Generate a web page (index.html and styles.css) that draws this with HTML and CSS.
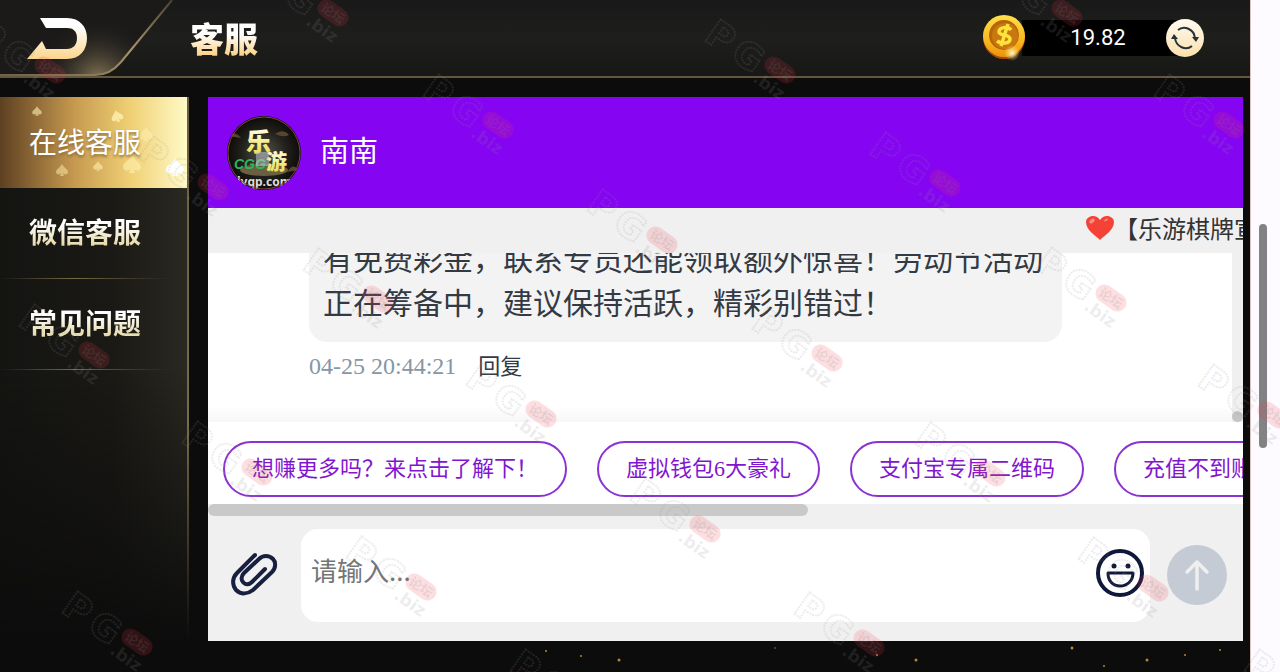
FILE: index.html
```html
<!DOCTYPE html>
<html lang="zh-CN">

<head>
    <meta charset="UTF-8">
    <meta name="viewport" content="width=device-width, initial-scale=1.0">
    <title>客服</title>
    <link rel="stylesheet" href="styles.css">
</head>

<body>
    <div class="app">
        <header class="topbar">
            <button type="button" class="back-btn" aria-label="返回">
                <svg width="180" height="76" viewBox="0 0 180 76">
                    <defs>
                        <linearGradient id="gold" x1="0" y1="0" x2="0" y2="1">
                            <stop offset="0.2" stop-color="#ffffff" />
                            <stop offset="1" stop-color="#fbd58c" />
                        </linearGradient>
                        <radialGradient id="glow" gradientUnits="userSpaceOnUse" cx="98" cy="80" r="62">
                            <stop offset="0" stop-color="#8a7a58" />
                            <stop offset="1" stop-color="#1b1a19" stop-opacity="0" />
                        </radialGradient>
                        <linearGradient id="edge" x1="0" y1="1" x2="1" y2="0">
                            <stop offset="0" stop-color="#6f6047" />
                            <stop offset="0.55" stop-color="#a8936b" />
                            <stop offset="1" stop-color="#4a4334" />
                        </linearGradient>
                    </defs>
                    <path d="M0 0H172L121 62Q110 75 95 75H0Z" fill="#1b1a19" />
                    <path d="M0 0H172L121 62Q110 75 95 75H0Z" fill="url(#glow)" />
                    <path d="M172 0L121 62Q110 75 95 75H0" fill="none" stroke="url(#edge)" stroke-width="2" />
                    <path d="M40 18H67C80 18 87 27 87 38C87 50 80 59 67 59H27L42 41L46 49H67C73 49 77 45 77 38C77 31 73 28 67 28H46Z" fill="url(#gold)" />
                </svg>
            </button>
            <h1 class="title">客服</h1>
            <div class="wallet">
                <svg class="coin" width="46" height="46" viewBox="0 0 46 46" aria-hidden="true">
                    <defs>
                        <linearGradient id="coinRim" x1="0" y1="0" x2="0" y2="1">
                            <stop offset="0" stop-color="#ffe04a" />
                            <stop offset="0.65" stop-color="#f8b51c" />
                            <stop offset="1" stop-color="#e8920c" />
                        </linearGradient>
                        <radialGradient id="spark">
                            <stop offset="0" stop-color="#fffbd0" />
                            <stop offset="1" stop-color="#ffd860" stop-opacity="0" />
                        </radialGradient>
                    </defs>
                    <circle cx="22" cy="23" r="21" fill="#a8480a" />
                    <circle cx="22" cy="21" r="21" fill="url(#coinRim)" />
                    <circle cx="22" cy="20" r="15" fill="#b9640c" />
                    <circle cx="23" cy="21" r="13" fill="#c9780f" />
                    <path d="M29 15C26 11 17 12 17 17C17 21 28 19 28 24C28 29 19 29 15 26M26 9L19 31" fill="none" stroke="#ffe33c" stroke-width="3.5" />
                    <circle cx="30" cy="38" r="8" fill="url(#spark)" />
                </svg>
                <span class="balance">19.82</span>
                <button type="button" class="refresh-btn" aria-label="刷新余额">
                    <svg width="38" height="38" viewBox="0 0 38 38">
                        <g fill="none" stroke="#26313a" stroke-width="2">
                            <path d="M12 11C18 6 28 10 29 19" />
                            <path d="M26 27C20 32 10 28 9 19" />
                        </g>
                        <path d="M26 18H33L30 23ZM5 20H12L8 15Z" fill="#26313a" />
                    </svg>
                </button>
            </div>
        </header>

        <div class="content">
            <nav class="sidebar">
                <a href="#online" class="menu-item active">
                    <svg class="spades" width="187" height="91" viewBox="0 0 187 91" aria-hidden="true">
                        <defs>
                            <path id="spade" d="M0 -6C2 -2 6 -1 6 2C6 5 2 5 1 3L2 6H-2L-1 3C-2 5 -6 5 -6 2C-6 -1 -2 -2 0 -6Z" />
                        </defs>
                        <g fill="#fff0b0">
                            <use href="#spade" transform="translate(37 14) scale(.8)" opacity=".6" />
                            <use href="#spade" transform="translate(117 19) rotate(-15)" opacity=".8" />
                            <use href="#spade" transform="translate(62 73)" opacity=".5" />
                            <use href="#spade" transform="translate(98 69) scale(.8)" opacity=".6" />
                            <use href="#spade" transform="translate(132 67) scale(1.5)" opacity=".6" />
                            <use href="#spade" transform="translate(146 37) scale(1.2)" opacity=".5" />
                            <use href="#spade" transform="translate(175 70) scale(1.5)" fill="#fff" />
                        </g>
                    </svg>
                    <span>在线客服</span>
                </a>
                <a href="#wechat" class="menu-item"><span>微信客服</span></a>
                <a href="#faq" class="menu-item"><span>常见问题</span></a>
            </nav>

            <main class="chat">
                <div class="chat-header">
                    <svg class="avatar" width="74" height="74" viewBox="0 0 74 74" aria-hidden="true">
                        <defs>
                            <radialGradient id="avatarBg">
                                <stop offset="0" stop-color="#56544a" />
                                <stop offset="0.6" stop-color="#22211c" />
                                <stop offset="1" stop-color="#0c0b09" />
                            </radialGradient>
                            <linearGradient id="logoText" x1="0" y1="0" x2="0" y2="1">
                                <stop offset="0.2" stop-color="#fffbe0" />
                                <stop offset="1" stop-color="#e6dc3a" />
                            </linearGradient>
                            <clipPath id="avatarClip"><circle cx="37" cy="37" r="37" /></clipPath>
                        </defs>
                        <g clip-path="url(#avatarClip)">
                            <rect width="74" height="74" fill="url(#avatarBg)" />
                            <path d="M48 18Q56 12 62 19Q56 22 48 18M2 20Q8 14 14 22M60 56Q66 46 72 54" fill="#5a4430" />
                            <ellipse cx="37" cy="54" rx="24" ry="6" fill="#6b5f42" />
                            <text class="logo-char" x="19" y="35" font-size="25" fill="url(#logoText)">乐</text>
                            <text class="logo-char" x="39" y="53" font-size="21" fill="url(#logoText)">游</text>
                            <text class="logo-tag" x="7" y="53" fill="#2fb45c">CGG</text>
                            <rect x="29" y="36" width="13" height="14" fill="#c8ccd4" opacity=".5" />
                            <text class="logo-url" x="10" y="70" fill="#dddddd">lyqp.com</text>
                        </g>
                        <circle cx="37" cy="37" r="36" fill="none" stroke="#7a4a36" />
                    </svg>
                    <h2 class="agent-name">南南</h2>
                </div>

                <div class="notice">
                    <svg class="heart" width="28" height="26" viewBox="0 0 28 26" aria-hidden="true">
                        <path d="M14 25C9 20 0 15 0 7C0 1 10 -2 14 5C18 -2 28 1 28 7C28 15 19 20 14 25Z" fill="#f44336" />
                        <ellipse cx="6" cy="6" rx="3" ry="2" fill="#ff8a80" transform="rotate(-40 6 6)" />
                        <ellipse cx="20" cy="5" rx="2" ry="1" fill="#ff8a80" transform="rotate(-30 20 5)" />
                    </svg>
                    <span>【乐游棋牌宣</span>
                </div>

                <div class="messages">
                    <div class="message-list">
                        <p class="bubble">有免费彩金，联系专员还能领取额外惊喜！劳动节活动正在筹备中，建议保持活跃，精彩别错过！</p>
                        <div class="meta">
                            <time>04-25 20:44:21</time>
                            <button type="button" class="reply-btn">回复</button>
                        </div>
                    </div>
                    <div class="scroll-track"><div class="scroll-thumb"></div></div>
                </div>

                <div class="quick-replies">
                    <button type="button">想赚更多吗？来点击了解下！</button>
                    <button type="button">虚拟钱包6大豪礼</button>
                    <button type="button">支付宝专属二维码</button>
                    <button type="button">充值不到账</button>
                </div>
                <div class="h-scroll"><div class="h-scroll-thumb"></div></div>

                <form class="composer">
                    <button type="button" class="icon-btn attach" aria-label="附件">
                        <svg width="48" height="48" viewBox="0 0 48 48">
                            <path d="M24 4L6 22C1 27 1 34 5 39C10 44 17 43 22 39L41 21C45 17 45 11 42 8C38 4 32 4 28 8L13 22C10 25 10 29 12 31C14 34 18 34 21 31L34 18" fill="none" stroke="#182040" stroke-width="4" stroke-linecap="round" stroke-linejoin="round" />
                        </svg>
                    </button>
                    <div class="input-box">
                        <input type="text" aria-label="消息" placeholder="请输入...">
                        <button type="button" class="icon-btn" aria-label="表情">
                            <svg width="48" height="48" viewBox="0 0 48 48" fill="none" stroke="#10183a" stroke-width="4">
                                <circle cx="24" cy="24" r="22" />
                                <path d="M12 24H37C37 32 31 37 24 37C17 37 12 32 12 24Z" stroke-width="3" stroke-linejoin="round" />
                                <circle cx="18" cy="17" r="2.5" fill="#10183a" stroke="none" />
                                <circle cx="32" cy="17" r="2.5" fill="#10183a" stroke="none" />
                            </svg>
                        </button>
                    </div>
                    <button type="submit" class="send-btn" aria-label="发送">
                        <svg width="60" height="60" viewBox="0 0 60 60">
                            <path d="M30 44V17M20 27L30 17L40 27" fill="none" stroke="#efefef" stroke-width="3.5" stroke-linecap="round" stroke-linejoin="round" />
                        </svg>
                    </button>
                </form>
            </main>
        </div>

        <footer class="sparkles">
            <svg width="1250" height="31" aria-hidden="true">
                <g fill="#b8862c">
                    <circle cx="546" cy="10" r="1" />
                    <circle cx="581" cy="15" r="1" />
                    <circle cx="619" cy="19" r="1.5" />
                    <circle cx="775" cy="7" r="1" opacity=".5" />
                    <circle cx="877" cy="14" r="1" />
                    <circle cx="916" cy="19" r="1.5" />
                    <circle cx="1072" cy="7" r="1.5" />
                    <circle cx="1104" cy="25" r="1" />
                    <circle cx="1147" cy="19" r="1.5" />
                    <circle cx="1185" cy="14" r="1" />
                    <circle cx="1220" cy="9" r="1" />
                </g>
            </svg>
        </footer>
    </div>

    <aside class="page-scroll"><div class="page-scroll-thumb"></div></aside>

    <!-- watermark layer -->
    <svg class="watermark" aria-hidden="true">
        <defs>
            <g id="mark">
                <g transform="rotate(35)">
                    <text class="mark-logo" x="-81 -49" y="19">PG</text>
                    <rect class="mark-pill" x="-17" y="-9" width="34" height="18" rx="9" />
                    <text class="mark-cn" x="-13" y="5">论坛</text>
                    <text class="mark-biz" x="-17" y="25">.biz</text>
                </g>
            </g>
        </defs>
        <use href="#mark" x="50" y="70" />
        <use href="#mark" x="333" y="13" />
        <use href="#mark" x="213" y="187" />
        <use href="#mark" x="498" y="125" />
        <use href="#mark" x="780" y="70" />
        <use href="#mark" x="1067" y="13" />
        <use href="#mark" x="94" y="355" />
        <use href="#mark" x="378" y="299" />
        <use href="#mark" x="662" y="240" />
        <use href="#mark" x="945" y="183" />
        <use href="#mark" x="1229" y="125" />
        <use href="#mark" x="257" y="472" />
        <use href="#mark" x="541" y="414" />
        <use href="#mark" x="827" y="358" />
        <use href="#mark" x="1111" y="298" />
        <use href="#mark" x="137" y="642" />
        <use href="#mark" x="421" y="587" />
        <use href="#mark" x="705" y="529" />
        <use href="#mark" x="990" y="473" />
        <use href="#mark" x="1273" y="415" />
        <use href="#mark" x="585" y="700" />
        <use href="#mark" x="869" y="643" />
        <use href="#mark" x="1153" y="588" />
        <use href="#mark" x="1319" y="700" />
    </svg>
</body>

</html>
```

FILE: styles.css
```css
* {
    box-sizing: border-box;
}

body {
    margin: 0;
    height: 100vh;
    display: flex;
    overflow: hidden;
    background-color: #fdfbff;
    font-family: "Noto Sans CJK SC", sans-serif;
}

h1,
h2,
p {
    margin: 0;
}

button {
    padding: 0;
    border: none;
    background: none;
    font-family: inherit;
    cursor: pointer;
}

svg {
    display: block;
    flex-shrink: 0;
}

.app {
    flex: 1;
    min-width: 0;
    display: flex;
    flex-direction: column;
    background-color: #0c0c0c;
}

/* top bar */
.topbar {
    height: 78px;
    display: flex;
    align-items: center;
    padding-right: 46px;
    background: linear-gradient(#191919, #1e1e1c 50%, #171715);
    border-bottom: 2px solid #63563d;
}

.title {
    margin-left: 10px;
    font-size: 34px;
    line-height: 40px;
    font-weight: 900;
    color: transparent;
    background: linear-gradient(#ffffff 40%, #fbd58c 90%);
    background-clip: text;
}

.wallet {
    margin-left: auto;
    display: flex;
    align-items: center;
}

.coin {
    z-index: 1;
}

.balance {
    width: 164px;
    height: 36px;
    margin: 0 -20px 0 -6px;
    padding-right: 12px;
    text-align: center;
    font-family: Roboto, sans-serif;
    font-size: 22px;
    line-height: 36px;
    color: #ffffff;
    background-color: #000000;
}

.refresh-btn {
    border-radius: 50%;
    background: linear-gradient(#fffaf0, #fbe0ac);
}

/* side menu */
.content {
    flex: 1;
    min-height: 0;
    display: flex;
    gap: 19px;
    padding: 19px 7px 0 0;
}

.sidebar {
    width: 189px;
    flex-shrink: 0;
    border-right: 2px solid;
    border-image: linear-gradient(#6b5e40, #7a6b47 60%, #0c0c0c) 1;
    background: linear-gradient(to bottom, transparent 50%, #0c0c0c), linear-gradient(to right, #141412, #1a1915 60%, #292821);
}

.menu-item {
    height: 91px;
    display: flex;
    align-items: center;
    padding: 0 0 4px 29px;
    font-size: 28px;
    font-weight: 700;
    text-decoration: none;
    border-bottom: 1px solid;
    border-image: linear-gradient(to right, transparent, #7a6846 40%, transparent 90%) 1;
}

.menu-item span {
    line-height: 36px;
    color: transparent;
    background: linear-gradient(#ffffff 30%, #e6dcae 85%);
    background-clip: text;
}

.menu-item.active {
    position: relative;
    font-weight: 400;
    border: none;
    background: linear-gradient(to right, #5e4022, #c69a4f 40%, #f0d075 70%, #fffac8);
}

.menu-item.active span {
    position: relative;
    color: #ffffff;
    background: none;
    text-shadow: 0 2px 3px #8a6a3a;
}

.spades {
    position: absolute;
    left: 0;
    top: 0;
}

/* chat panel */
.chat {
    flex: 1;
    min-width: 0;
    display: flex;
    flex-direction: column;
    background-color: #f0f0f0;
}

.chat-header {
    height: 111px;
    display: flex;
    align-items: center;
    gap: 19px;
    padding-left: 19px;
    background-color: #8505f2;
}

.logo-char {
    font-weight: 900;
}

.logo-tag {
    font-family: "Liberation Sans", sans-serif;
    font-size: 14px;
    font-weight: bold;
    font-style: italic;
}

.logo-url {
    font-family: "Noto Sans", sans-serif;
    font-size: 12px;
    font-weight: bold;
}

.agent-name {
    padding-bottom: 8px;
    font-size: 29px;
    font-weight: 400;
    color: #ffffff;
}

.notice {
    height: 45px;
    display: flex;
    align-items: center;
    padding: 0 0 5px 878px;
    overflow: hidden;
    white-space: nowrap;
    font-size: 24px;
    line-height: 40px;
    color: #333333;
}

.messages {
    flex: 1;
    min-height: 0;
    display: flex;
    overflow: hidden;
    background-color: #ffffff;
}

.message-list {
    flex: 1;
    display: flex;
    flex-direction: column;
    justify-content: flex-end;
    align-items: flex-start;
    padding: 0 170px 38px 101px;
    background: linear-gradient(to top, #f7f7f7, #ffffff 16px);
}

.bubble {
    padding: 17px 14px 19px;
    border-radius: 18px;
    background-color: #f3f3f3;
    font-size: 30px;
    line-height: 44px;
    color: #343a44;
}

.meta {
    display: flex;
    align-items: center;
    gap: 22px;
    height: 40px;
    margin-top: 6px;
    padding-bottom: 4px;
}

.meta time {
    padding-top: 4px;
    font-family: "Liberation Serif", serif;
    font-size: 24px;
    color: #8796a5;
}

.reply-btn {
    font-size: 22px;
    color: #343a44;
}

.scroll-track {
    width: 11px;
    display: flex;
    align-items: flex-end;
    background-color: #f0f0f0;
}

.scroll-thumb {
    width: 11px;
    height: 11px;
    border-radius: 6px;
    background-color: #c4c4c4;
}

.quick-replies {
    height: 82px;
    display: flex;
    align-items: center;
    gap: 30px;
    padding: 12px 0 0 15px;
    overflow: hidden;
    background-color: #ffffff;
}

.quick-replies button {
    height: 56px;
    flex-shrink: 0;
    margin-bottom: 1px;
    padding: 0 27px 5px;
    border: 2px solid #8b32d2;
    border-radius: 28px;
    font-family: "Liberation Serif", "Noto Sans CJK SC", sans-serif;
    font-size: 22px;
    color: #8216cf;
    white-space: nowrap;
}

.h-scroll-thumb {
    width: 58%;
    height: 12px;
    border-radius: 6px;
    background-color: #c9c9c9;
}

.composer {
    height: 125px;
    display: flex;
    align-items: center;
    gap: 17px;
    padding: 0 16px 7px 23px;
}

.icon-btn {
    flex-shrink: 0;
}

.attach {
    margin-right: 5px;
}

.input-box {
    flex: 1;
    height: 93px;
    display: flex;
    align-items: center;
    padding: 0 6px 5px 10px;
    border-radius: 17px;
    background-color: #ffffff;
}

.input-box input {
    flex: 1;
    min-width: 0;
    height: 60px;
    padding: 0 0 6px;
    border: none;
    outline: none;
    background: none;
    font-family: inherit;
    font-size: 26px;
}

.input-box input::placeholder {
    color: #757575;
}

.send-btn {
    border-radius: 50%;
    background-color: #c4cbd4;
}

.sparkles {
    height: 31px;
    overflow: hidden;
}

/* page scrollbar */
.page-scroll {
    width: 30px;
    padding: 224px 0 0 8px;
    border-left: 1px solid #dcc4c0;
}

.page-scroll-thumb {
    width: 8px;
    height: 224px;
    border-radius: 4px;
    background-color: #828284;
}

/* watermark */
.watermark {
    position: absolute;
    left: 0;
    top: 0;
    width: 100%;
    height: 100%;
    pointer-events: none;
}

.mark-logo {
    font-family: "DejaVu Sans", sans-serif;
    font-size: 36px;
    font-weight: bold;
    fill: none;
    stroke: #909090;
    stroke-width: 2;
    stroke-opacity: 0.18;
    stroke-dasharray: 2 1;
}

.mark-pill {
    fill: #f03a4a;
    fill-opacity: 0.16;
}

.mark-cn {
    font-size: 13px;
    font-weight: bold;
    fill: #808080;
    fill-opacity: 0.18;
}

.mark-biz {
    font-family: "DejaVu Sans", sans-serif;
    font-size: 17px;
    font-weight: bold;
    fill: #909090;
    fill-opacity: 0.16;
}
```
